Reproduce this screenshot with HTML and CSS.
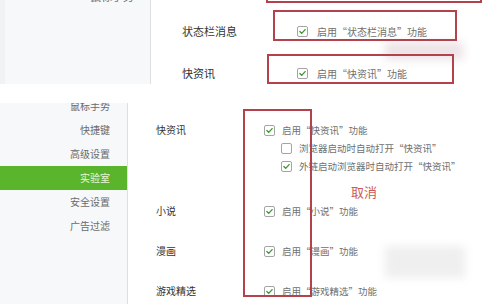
FILE: index.html
```html
<!DOCTYPE html>
<html lang="zh-CN">
<head>
<meta charset="utf-8">
<title>实验室设置</title>
<link rel="stylesheet" href="styles.css">
</head>
<body>
<div class="page">
  <section class="shot shot-top">
    <aside class="side side-top">
      <div class="side-inner-top">
        <div class="side-item">鼠标手势</div>
      </div>
    </aside>
    <div class="content content-top">
      <div class="row-top">
        <div class="label-top">状态栏消息</div>
        <div class="opt opt-top">
          <span class="cb checked"><svg viewBox="0 0 11 11"><polyline points="2.3,5.6 4.5,7.8 8.7,3.2"/></svg></span>
          <span>启用“状态栏消息”功能</span>
        </div>
      </div>
      <div class="row-top">
        <div class="label-top">快资讯</div>
        <div class="opt opt-top">
          <span class="cb checked"><svg viewBox="0 0 11 11"><polyline points="2.3,5.6 4.5,7.8 8.7,3.2"/></svg></span>
          <span>启用“快资讯”功能</span>
        </div>
      </div>
    </div>
  </section>

  <section class="shot shot-bottom">
    <aside class="side side-bottom">
      <div class="side-inner-bottom">
        <div class="side-item">鼠标手势</div>
        <div class="side-item">快捷键</div>
        <div class="side-item">高级设置</div>
        <div class="side-item active">实验室</div>
        <div class="side-item">安全设置</div>
        <div class="side-item">广告过滤</div>
      </div>
    </aside>
    <div class="content content-bottom">
      <div class="group first">
        <div class="label">快资讯</div>
        <div class="opts">
          <div class="opt">
            <span class="cb checked"><svg viewBox="0 0 11 11"><polyline points="2.3,5.6 4.5,7.8 8.7,3.2"/></svg></span>
            <span>启用“快资讯”功能</span>
          </div>
          <div class="opt sub">
            <span class="cb"></span>
            <span>浏览器启动时自动打开“快资讯”</span>
          </div>
          <div class="opt sub">
            <span class="cb checked"><svg viewBox="0 0 11 11"><polyline points="2.3,5.6 4.5,7.8 8.7,3.2"/></svg></span>
            <span>外链启动浏览器时自动打开“快资讯”</span>
          </div>
          <div class="cancel">取消</div>
        </div>
      </div>
      <div class="group">
        <div class="label">小说</div>
        <div class="opts">
          <div class="opt">
            <span class="cb checked"><svg viewBox="0 0 11 11"><polyline points="2.3,5.6 4.5,7.8 8.7,3.2"/></svg></span>
            <span>启用“小说”功能</span>
          </div>
        </div>
      </div>
      <div class="group">
        <div class="label">漫画</div>
        <div class="opts">
          <div class="opt">
            <span class="cb checked"><svg viewBox="0 0 11 11"><polyline points="2.3,5.6 4.5,7.8 8.7,3.2"/></svg></span>
            <span>启用“漫画”功能</span>
          </div>
        </div>
      </div>
      <div class="group">
        <div class="label">游戏精选</div>
        <div class="opts">
          <div class="opt">
            <span class="cb checked"><svg viewBox="0 0 11 11"><polyline points="2.3,5.6 4.5,7.8 8.7,3.2"/></svg></span>
            <span>启用“游戏精选”功能</span>
          </div>
        </div>
      </div>
    </div>
  </section>

  <div class="blur blur-a"></div>
  <div class="blur blur-b"></div>
  <div class="mark mark-a"></div>
  <div class="mark mark-b"></div>
  <div class="mark mark-c"></div>
  <div class="mark mark-d"></div>
</div>
</body>
</html>
```

FILE: styles.css
```css
html, body {
  margin: 0;
  padding: 0;
  background: #ffffff;
}

body {
  font-family: "Noto Sans CJK SC", "Noto Sans", sans-serif;
  color: #333333;
}

.page {
  position: relative;
  width: 488px;
  height: 304px;
  overflow: hidden;
  display: flex;
  flex-direction: column;
}

.shot {
  display: flex;
  overflow: hidden;
  flex-shrink: 0;
}

.shot-top {
  height: 84px;
}

.shot-bottom {
  margin-top: 19px;
  height: 201px;
}

.side {
  background: #f7f8fa;
  border-right: 1px solid #dedfe2;
  box-sizing: border-box;
  flex-shrink: 0;
}

.side-top {
  width: 151px;
  border-left: 5px solid #f1f2f4;
}

.side-inner-top {
  margin-top: -16px;
  padding-right: 16px;
}

.side-bottom {
  width: 128px;
}

.side-inner-bottom {
  margin-top: -9px;
}

.side-item {
  height: 24px;
  line-height: 24px;
  text-align: right;
  padding-right: 17px;
  font-size: 10px;
  color: #6a6a6a;
}

.side-top .side-item {
  font-size: 11px;
  padding-right: 0;
}

.side-item.active {
  background: #5ab52c;
  color: #e9f7d4;
}

.content {
  flex: 1;
}

.content-top {
  padding-top: 10px;
  padding-left: 31px;
}

.row-top {
  height: 42px;
  display: flex;
  align-items: center;
}

.label-top {
  width: 115px;
  font-size: 11px;
  color: #333333;
}

.opt {
  display: flex;
  align-items: center;
  height: 18px;
  font-size: 9.5px;
  color: #707070;
  white-space: nowrap;
}

.opt-top {
  font-size: 10px;
  gap: 9px;
}

.opt .cb {
  margin-right: 7px;
}

.opt-top .cb {
  margin-right: 0;
}

.cb {
  width: 11px;
  height: 11px;
  box-sizing: border-box;
  border: 1px solid #a4a4a4;
  border-radius: 2px;
  background: #ffffff;
  display: inline-flex;
  flex-shrink: 0;
}

.cb svg {
  width: 9px;
  height: 9px;
  fill: none;
  stroke: #3f9b33;
  stroke-width: 1.7;
  stroke-linecap: round;
  stroke-linejoin: round;
}

.content-bottom {
  padding-top: 18px;
  padding-left: 28px;
  display: flex;
  flex-direction: column;
  gap: 22px;
}

.group {
  display: flex;
}

.group.first {
  margin-bottom: -22px;
}

.label {
  width: 108px;
  height: 18px;
  line-height: 18px;
  font-size: 10px;
  color: #333333;
}

.opts {
  display: flex;
  flex-direction: column;
}

.opt.sub {
  padding-left: 17px;
}

.cancel {
  margin-top: 7px;
  height: 20px;
  line-height: 20px;
  padding-left: 87px;
  font-size: 13px;
  color: #cc5a55;
}

.mark {
  position: absolute;
  border: 2px solid #b4424c;
  box-sizing: border-box;
}

.mark-a {
  left: 266px;
  top: -20px;
  width: 216px;
  height: 23px;
}

.mark-b {
  left: 273px;
  top: 10px;
  width: 184px;
  height: 31px;
}

.mark-c {
  left: 267px;
  top: 54px;
  width: 187px;
  height: 30px;
}

.mark-d {
  left: 243px;
  top: 109px;
  width: 69px;
  height: 188px;
}

.blur {
  position: absolute;
  filter: blur(4px);
}

.blur-a {
  left: 385px;
  top: 42px;
  width: 78px;
  height: 18px;
  background: rgba(215, 195, 200, 0.45);
}

.blur-b {
  left: 385px;
  top: 246px;
  width: 80px;
  height: 32px;
  background: rgba(225, 225, 228, 0.55);
}
```
